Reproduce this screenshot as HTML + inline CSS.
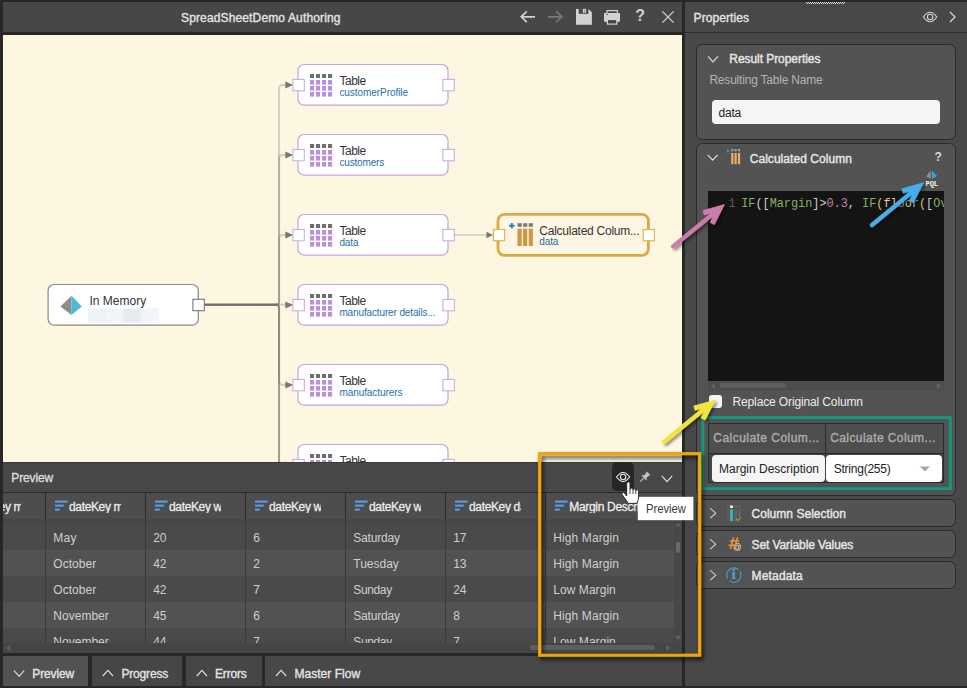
<!DOCTYPE html>
<html><head><meta charset="utf-8"><title>SpreadSheetDemo Authoring</title>
<style>
html,body{margin:0;padding:0;}
body{width:967px;height:688px;overflow:hidden;background:#272727;position:relative;font-family:"Liberation Sans",sans-serif;}
body>div,body>span,body>svg{position:absolute;}
div{box-sizing:border-box;}
span{white-space:pre;line-height:1;display:block;}
.m{font-family:"Liberation Mono",monospace;}
</style></head>
<body>
<div style="left:3px;top:2px;width:679px;height:30px;background:#474747;"></div>
<div style="left:3px;top:35px;width:679px;height:427px;background:#fdf6e0;"></div>
<div style="left:685px;top:2px;width:282px;height:684px;background:#484848;"></div>
<div style="left:685px;top:32px;width:282px;height:1px;background:#2e2e2e;"></div>
<div style="left:3px;top:462px;width:679px;height:30px;background:#484848;"></div>
<div style="left:3px;top:462px;width:679px;height:1px;background:#3a3a3a;"></div>
<div style="left:3px;top:492px;width:679px;height:1px;background:#2b2b2b;"></div>
<div style="left:3px;top:493px;width:679px;height:26px;background:#4d4d4d;"></div>
<div style="left:3px;top:519px;width:679px;height:5px;background:#474747;"></div>
<div style="left:3px;top:524px;width:671px;height:26px;background:#4a4a4a;"></div>
<div style="left:3px;top:550px;width:671px;height:26px;background:#525252;"></div>
<div style="left:3px;top:576px;width:671px;height:26px;background:#4a4a4a;"></div>
<div style="left:3px;top:602px;width:671px;height:26px;background:#525252;"></div>
<div style="left:3px;top:628px;width:671px;height:15px;background:#4a4a4a;"></div>
<div style="left:674px;top:519px;width:8px;height:124px;background:#474747;"></div>
<div style="left:3px;top:643px;width:679px;height:10px;background:#454545;"></div>
<div style="left:45px;top:493px;width:1px;height:26px;background:#2b2b2b;"></div>
<div style="left:45px;top:519px;width:1px;height:124px;background:#393939;"></div>
<div style="left:145px;top:493px;width:1px;height:26px;background:#2b2b2b;"></div>
<div style="left:145px;top:519px;width:1px;height:124px;background:#393939;"></div>
<div style="left:245px;top:493px;width:1px;height:26px;background:#2b2b2b;"></div>
<div style="left:245px;top:519px;width:1px;height:124px;background:#393939;"></div>
<div style="left:345px;top:493px;width:1px;height:26px;background:#2b2b2b;"></div>
<div style="left:345px;top:519px;width:1px;height:124px;background:#393939;"></div>
<div style="left:445px;top:493px;width:1px;height:26px;background:#2b2b2b;"></div>
<div style="left:445px;top:519px;width:1px;height:124px;background:#393939;"></div>
<div style="left:545px;top:493px;width:1px;height:26px;background:#2b2b2b;"></div>
<div style="left:545px;top:519px;width:1px;height:124px;background:#393939;"></div>
<div style="left:3px;top:656px;width:85px;height:30px;background:#525252;"></div>
<div style="left:92px;top:656px;width:90px;height:30px;background:#464646;"></div>
<div style="left:186px;top:656px;width:76px;height:30px;background:#464646;"></div>
<div style="left:265px;top:656px;width:417px;height:30px;background:#484848;"></div>
<div style="left:696px;top:44px;width:260px;height:96px;background:#535353;border:1px solid #2a2a2a;border-radius:6.5px;"></div>
<div style="left:696px;top:143px;width:260px;height:353px;background:#535353;border:1px solid #2a2a2a;border-radius:6.5px;"></div>
<div style="left:696px;top:499px;width:260px;height:28px;background:#535353;border:1px solid #2a2a2a;border-radius:6.5px;"></div>
<div style="left:696px;top:530px;width:260px;height:28px;background:#535353;border:1px solid #2a2a2a;border-radius:6.5px;"></div>
<div style="left:696px;top:561px;width:260px;height:28px;background:#535353;border:1px solid #2a2a2a;border-radius:6.5px;"></div>
<div style="left:711.8px;top:99.7px;width:228.7px;height:24.3px;background:#f5f5f5;border-radius:4px;"></div>
<div style="left:708.3px;top:191px;width:235.7px;height:190px;background:#141414;"></div>
<div style="left:708.3px;top:381px;width:235.7px;height:9.8px;background:#4d4d4d;"></div>
<div style="left:720px;top:383px;width:65.6px;height:5px;background:#5e5e5e;border-radius:2.5px;"></div>
<div style="left:709.2px;top:394.8px;width:13.2px;height:13.4px;background:#f4f4f4;border-radius:3px;"></div>
<div style="left:708.3px;top:423px;width:235.7px;height:60px;background:#2b2b2b;"></div>
<div style="left:709.3px;top:424px;width:116px;height:28.5px;background:#4e4e4e;"></div>
<div style="left:826.3px;top:424px;width:116.7px;height:28.5px;background:#4e4e4e;"></div>
<div style="left:709.3px;top:453.5px;width:233.7px;height:28.5px;background:#444;"></div>
<div style="left:711.8px;top:454.9px;width:113.2px;height:26.8px;background:#f5f5f5;border-radius:4px;"></div>
<div style="left:826.4px;top:454.9px;width:115.2px;height:26.8px;background:#fff;border-radius:4px;"></div>
<div style="left:675.6px;top:542.4px;width:4.8px;height:10.4px;background:#6a6a6a;border-radius:2.4px;"></div>
<div style="left:530.4px;top:645.4px;width:124.4px;height:5px;background:#5e5e5e;border-radius:2.5px;"></div>
<div style="left:3px;top:653px;width:679px;height:3px;background:#272727;"></div>
<svg style="left:0;top:0" width="967" height="688" viewBox="0 0 967 688">
<defs><clipPath id="cv"><rect x="3" y="35" width="679" height="427"/></clipPath></defs>
<g clip-path="url(#cv)">
<path d="M204.5,304.85 H276.05 Q279.05,304.85 279.05,301.85 V89 Q279.05,85 283.05,85 H287" fill="none" stroke="#646464" stroke-opacity="0.27" stroke-width="2"/>
<polygon points="285.3,81.5 293.4,85 285.3,88.5" fill="#777"/>
<path d="M204.5,304.85 H276.05 Q279.05,304.85 279.05,301.85 V159 Q279.05,155 283.05,155 H287" fill="none" stroke="#646464" stroke-opacity="0.27" stroke-width="2"/>
<polygon points="285.3,151.5 293.4,155 285.3,158.5" fill="#777"/>
<path d="M204.5,304.85 H276.05 Q279.05,304.85 279.05,301.85 V239 Q279.05,235 283.05,235 H287" fill="none" stroke="#646464" stroke-opacity="0.27" stroke-width="2"/>
<polygon points="285.3,231.5 293.4,235 285.3,238.5" fill="#777"/>
<path d="M204.5,304.85 H287" fill="none" stroke="#646464" stroke-opacity="0.27" stroke-width="2"/>
<polygon points="285.3,301.5 293.4,305 285.3,308.5" fill="#777"/>
<path d="M204.5,304.85 H276.05 Q279.05,304.85 279.05,307.85 V381 Q279.05,385 283.05,385 H287" fill="none" stroke="#646464" stroke-opacity="0.27" stroke-width="2"/>
<polygon points="285.3,381.5 293.4,385 285.3,388.5" fill="#777"/>
<path d="M204.5,304.85 H276.05 Q279.05,304.85 279.05,307.85 V461 Q279.05,465 283.05,465 H287" fill="none" stroke="#646464" stroke-opacity="0.27" stroke-width="2"/>
<polygon points="285.3,461.5 293.4,465 285.3,468.5" fill="#777"/>
<path d="M204.5,304.85 H276.05 Q279.05,304.85 279.05,307.85 V541 Q279.05,545 283.05,545 H287" fill="none" stroke="#646464" stroke-opacity="0.27" stroke-width="2"/>
<polygon points="285.3,541.5 293.4,545 285.3,548.5" fill="#777"/>
<path d="M204.5,304.85 H276.05 Q279.05,304.85 279.05,307.85 V621 Q279.05,625 283.05,625 H287" fill="none" stroke="#646464" stroke-opacity="0.27" stroke-width="2"/>
<polygon points="285.3,621.5 293.4,625 285.3,628.5" fill="#777"/>
<path d="M454.5,235 H488" fill="none" stroke="#646464" stroke-opacity="0.3" stroke-width="1.6"/>
<polygon points="486.5,231.8 493,235 486.5,238.2" fill="#777"/>
<rect x="298" y="64.5" width="150" height="40.6" rx="6" fill="#fff" stroke="#c9a2e3" stroke-width="1.2"/>
<rect x="292.9" y="79.4" width="11.4" height="11.4" fill="#fff" stroke="#c9a5e4" stroke-width="1"/>
<rect x="442.9" y="79.4" width="11.4" height="11.4" fill="#fff" stroke="#c9a5e4" stroke-width="1"/>
<rect x="310" y="74" width="4.1" height="4" fill="#6f6f6f"/>
<rect x="310" y="80" width="4.1" height="4.6" fill="#bb8fdd"/>
<rect x="310" y="86" width="4.1" height="4.6" fill="#bb8fdd"/>
<rect x="310" y="92" width="4.1" height="4.6" fill="#bb8fdd"/>
<rect x="316" y="74" width="4.1" height="4" fill="#6f6f6f"/>
<rect x="316" y="80" width="4.1" height="4.6" fill="#bb8fdd"/>
<rect x="316" y="86" width="4.1" height="4.6" fill="#bb8fdd"/>
<rect x="316" y="92" width="4.1" height="4.6" fill="#bb8fdd"/>
<rect x="322" y="74" width="4.1" height="4" fill="#6f6f6f"/>
<rect x="322" y="80" width="4.1" height="4.6" fill="#bb8fdd"/>
<rect x="322" y="86" width="4.1" height="4.6" fill="#bb8fdd"/>
<rect x="322" y="92" width="4.1" height="4.6" fill="#bb8fdd"/>
<rect x="328" y="74" width="4.1" height="4" fill="#6f6f6f"/>
<rect x="328" y="80" width="4.1" height="4.6" fill="#bb8fdd"/>
<rect x="328" y="86" width="4.1" height="4.6" fill="#bb8fdd"/>
<rect x="328" y="92" width="4.1" height="4.6" fill="#bb8fdd"/>
<rect x="298" y="134.5" width="150" height="40.6" rx="6" fill="#fff" stroke="#c9a2e3" stroke-width="1.2"/>
<rect x="292.9" y="149.4" width="11.4" height="11.4" fill="#fff" stroke="#c9a5e4" stroke-width="1"/>
<rect x="442.9" y="149.4" width="11.4" height="11.4" fill="#fff" stroke="#c9a5e4" stroke-width="1"/>
<rect x="310" y="144" width="4.1" height="4" fill="#6f6f6f"/>
<rect x="310" y="150" width="4.1" height="4.6" fill="#bb8fdd"/>
<rect x="310" y="156" width="4.1" height="4.6" fill="#bb8fdd"/>
<rect x="310" y="162" width="4.1" height="4.6" fill="#bb8fdd"/>
<rect x="316" y="144" width="4.1" height="4" fill="#6f6f6f"/>
<rect x="316" y="150" width="4.1" height="4.6" fill="#bb8fdd"/>
<rect x="316" y="156" width="4.1" height="4.6" fill="#bb8fdd"/>
<rect x="316" y="162" width="4.1" height="4.6" fill="#bb8fdd"/>
<rect x="322" y="144" width="4.1" height="4" fill="#6f6f6f"/>
<rect x="322" y="150" width="4.1" height="4.6" fill="#bb8fdd"/>
<rect x="322" y="156" width="4.1" height="4.6" fill="#bb8fdd"/>
<rect x="322" y="162" width="4.1" height="4.6" fill="#bb8fdd"/>
<rect x="328" y="144" width="4.1" height="4" fill="#6f6f6f"/>
<rect x="328" y="150" width="4.1" height="4.6" fill="#bb8fdd"/>
<rect x="328" y="156" width="4.1" height="4.6" fill="#bb8fdd"/>
<rect x="328" y="162" width="4.1" height="4.6" fill="#bb8fdd"/>
<rect x="298" y="214.5" width="150" height="40.6" rx="6" fill="#fff" stroke="#c9a2e3" stroke-width="1.2"/>
<rect x="292.9" y="229.4" width="11.4" height="11.4" fill="#fff" stroke="#c9a5e4" stroke-width="1"/>
<rect x="442.9" y="229.4" width="11.4" height="11.4" fill="#fff" stroke="#c9a5e4" stroke-width="1"/>
<rect x="310" y="224" width="4.1" height="4" fill="#6f6f6f"/>
<rect x="310" y="230" width="4.1" height="4.6" fill="#bb8fdd"/>
<rect x="310" y="236" width="4.1" height="4.6" fill="#bb8fdd"/>
<rect x="310" y="242" width="4.1" height="4.6" fill="#bb8fdd"/>
<rect x="316" y="224" width="4.1" height="4" fill="#6f6f6f"/>
<rect x="316" y="230" width="4.1" height="4.6" fill="#bb8fdd"/>
<rect x="316" y="236" width="4.1" height="4.6" fill="#bb8fdd"/>
<rect x="316" y="242" width="4.1" height="4.6" fill="#bb8fdd"/>
<rect x="322" y="224" width="4.1" height="4" fill="#6f6f6f"/>
<rect x="322" y="230" width="4.1" height="4.6" fill="#bb8fdd"/>
<rect x="322" y="236" width="4.1" height="4.6" fill="#bb8fdd"/>
<rect x="322" y="242" width="4.1" height="4.6" fill="#bb8fdd"/>
<rect x="328" y="224" width="4.1" height="4" fill="#6f6f6f"/>
<rect x="328" y="230" width="4.1" height="4.6" fill="#bb8fdd"/>
<rect x="328" y="236" width="4.1" height="4.6" fill="#bb8fdd"/>
<rect x="328" y="242" width="4.1" height="4.6" fill="#bb8fdd"/>
<rect x="298" y="284.5" width="150" height="40.6" rx="6" fill="#fff" stroke="#c9a2e3" stroke-width="1.2"/>
<rect x="292.9" y="299.4" width="11.4" height="11.4" fill="#fff" stroke="#c9a5e4" stroke-width="1"/>
<rect x="442.9" y="299.4" width="11.4" height="11.4" fill="#fff" stroke="#c9a5e4" stroke-width="1"/>
<rect x="310" y="294" width="4.1" height="4" fill="#6f6f6f"/>
<rect x="310" y="300" width="4.1" height="4.6" fill="#bb8fdd"/>
<rect x="310" y="306" width="4.1" height="4.6" fill="#bb8fdd"/>
<rect x="310" y="312" width="4.1" height="4.6" fill="#bb8fdd"/>
<rect x="316" y="294" width="4.1" height="4" fill="#6f6f6f"/>
<rect x="316" y="300" width="4.1" height="4.6" fill="#bb8fdd"/>
<rect x="316" y="306" width="4.1" height="4.6" fill="#bb8fdd"/>
<rect x="316" y="312" width="4.1" height="4.6" fill="#bb8fdd"/>
<rect x="322" y="294" width="4.1" height="4" fill="#6f6f6f"/>
<rect x="322" y="300" width="4.1" height="4.6" fill="#bb8fdd"/>
<rect x="322" y="306" width="4.1" height="4.6" fill="#bb8fdd"/>
<rect x="322" y="312" width="4.1" height="4.6" fill="#bb8fdd"/>
<rect x="328" y="294" width="4.1" height="4" fill="#6f6f6f"/>
<rect x="328" y="300" width="4.1" height="4.6" fill="#bb8fdd"/>
<rect x="328" y="306" width="4.1" height="4.6" fill="#bb8fdd"/>
<rect x="328" y="312" width="4.1" height="4.6" fill="#bb8fdd"/>
<rect x="298" y="364.5" width="150" height="40.6" rx="6" fill="#fff" stroke="#c9a2e3" stroke-width="1.2"/>
<rect x="292.9" y="379.4" width="11.4" height="11.4" fill="#fff" stroke="#c9a5e4" stroke-width="1"/>
<rect x="442.9" y="379.4" width="11.4" height="11.4" fill="#fff" stroke="#c9a5e4" stroke-width="1"/>
<rect x="310" y="374" width="4.1" height="4" fill="#6f6f6f"/>
<rect x="310" y="380" width="4.1" height="4.6" fill="#bb8fdd"/>
<rect x="310" y="386" width="4.1" height="4.6" fill="#bb8fdd"/>
<rect x="310" y="392" width="4.1" height="4.6" fill="#bb8fdd"/>
<rect x="316" y="374" width="4.1" height="4" fill="#6f6f6f"/>
<rect x="316" y="380" width="4.1" height="4.6" fill="#bb8fdd"/>
<rect x="316" y="386" width="4.1" height="4.6" fill="#bb8fdd"/>
<rect x="316" y="392" width="4.1" height="4.6" fill="#bb8fdd"/>
<rect x="322" y="374" width="4.1" height="4" fill="#6f6f6f"/>
<rect x="322" y="380" width="4.1" height="4.6" fill="#bb8fdd"/>
<rect x="322" y="386" width="4.1" height="4.6" fill="#bb8fdd"/>
<rect x="322" y="392" width="4.1" height="4.6" fill="#bb8fdd"/>
<rect x="328" y="374" width="4.1" height="4" fill="#6f6f6f"/>
<rect x="328" y="380" width="4.1" height="4.6" fill="#bb8fdd"/>
<rect x="328" y="386" width="4.1" height="4.6" fill="#bb8fdd"/>
<rect x="328" y="392" width="4.1" height="4.6" fill="#bb8fdd"/>
<rect x="298" y="444.5" width="150" height="40.6" rx="6" fill="#fff" stroke="#c9a2e3" stroke-width="1.2"/>
<rect x="292.9" y="459.4" width="11.4" height="11.4" fill="#fff" stroke="#c9a5e4" stroke-width="1"/>
<rect x="442.9" y="459.4" width="11.4" height="11.4" fill="#fff" stroke="#c9a5e4" stroke-width="1"/>
<rect x="310" y="454" width="4.1" height="4" fill="#6f6f6f"/>
<rect x="310" y="460" width="4.1" height="4.6" fill="#bb8fdd"/>
<rect x="310" y="466" width="4.1" height="4.6" fill="#bb8fdd"/>
<rect x="310" y="472" width="4.1" height="4.6" fill="#bb8fdd"/>
<rect x="316" y="454" width="4.1" height="4" fill="#6f6f6f"/>
<rect x="316" y="460" width="4.1" height="4.6" fill="#bb8fdd"/>
<rect x="316" y="466" width="4.1" height="4.6" fill="#bb8fdd"/>
<rect x="316" y="472" width="4.1" height="4.6" fill="#bb8fdd"/>
<rect x="322" y="454" width="4.1" height="4" fill="#6f6f6f"/>
<rect x="322" y="460" width="4.1" height="4.6" fill="#bb8fdd"/>
<rect x="322" y="466" width="4.1" height="4.6" fill="#bb8fdd"/>
<rect x="322" y="472" width="4.1" height="4.6" fill="#bb8fdd"/>
<rect x="328" y="454" width="4.1" height="4" fill="#6f6f6f"/>
<rect x="328" y="460" width="4.1" height="4.6" fill="#bb8fdd"/>
<rect x="328" y="466" width="4.1" height="4.6" fill="#bb8fdd"/>
<rect x="328" y="472" width="4.1" height="4.6" fill="#bb8fdd"/>
</g>
<g clip-path="url(#cv)">
<rect x="48.1" y="284.5" width="150.2" height="40.6" rx="6" fill="#fff" stroke="#8a8a8a" stroke-width="1.2"/>
<rect x="192.9" y="299.3" width="11.4" height="11.4" fill="#fff" stroke="#777" stroke-width="1.1"/>
<polygon points="60.4,306.6 71.5,295.8 71.5,315" fill="#8e8e8e"/>
<polygon points="71.5,295.8 81.8,306.6 71.5,315" fill="#4db8d9"/>
<rect x="88" y="308.5" width="18" height="14" fill="#eef2f6"/>
<rect x="106" y="308.5" width="17" height="14" fill="#f2f5f8"/>
<rect x="123" y="308.5" width="18" height="14" fill="#e6eaf0"/>
<rect x="141" y="308.5" width="18" height="14" fill="#f1f4f8"/>
<rect x="498" y="214.3" width="150.4" height="41" rx="6.5" fill="#fdf6e2" stroke="#dba944" stroke-width="2.8"/>
<rect x="493.4" y="229.5" width="11.2" height="11.2" fill="#fff" stroke="#e0b458" stroke-width="1.2"/>
<rect x="643.2" y="229.5" width="11.2" height="11.2" fill="#fff" stroke="#e0b458" stroke-width="1.2"/>
<path d="M511.8,223 V228.6 M509,225.8 H514.6" stroke="#2f7fc1" stroke-width="1.9" fill="none"/>
<rect x="517.5" y="223.2" width="4.2" height="3.6" fill="#7a7a7a"/>
<rect x="517.5" y="228.6" width="4.2" height="17.4" fill="#cf9648"/>
<rect x="523.1" y="223.2" width="4.2" height="3.6" fill="#7a7a7a"/>
<rect x="523.1" y="228.6" width="4.2" height="17.4" fill="#cf9648"/>
<rect x="528.7" y="223.2" width="4.2" height="3.6" fill="#7a7a7a"/>
<rect x="528.7" y="228.6" width="4.2" height="17.4" fill="#cf9648"/>
</g>
<rect x="702.85" y="417.5" width="247.5" height="71.1" fill="none" stroke="#119a7b" stroke-width="2.9"/>
</svg>
<span style="left:181px;top:12.03px;font-size:12px;font-weight:400;color:#e4e4e4;letter-spacing:0.14px;-webkit-text-stroke:0.35px #e4e4e4;">SpreadSheetDemo Authoring</span>
<span style="left:693.6px;top:12.03px;font-size:12px;font-weight:400;color:#e4e4e4;letter-spacing:0.07px;-webkit-text-stroke:0.35px #e4e4e4;">Properties</span>
<span style="left:11.3px;top:471.73px;font-size:12px;font-weight:400;color:#dcdcdc;letter-spacing:-0.14px;-webkit-text-stroke:0.35px #dcdcdc;">Preview</span>
<span style="left:32.3px;top:668.03px;font-size:12px;font-weight:400;color:#e4e4e4;letter-spacing:-0.14px;-webkit-text-stroke:0.35px #e4e4e4;">Preview</span>
<span style="left:121.5px;top:668.03px;font-size:12px;font-weight:400;color:#e4e4e4;letter-spacing:-0.19px;-webkit-text-stroke:0.35px #e4e4e4;">Progress</span>
<span style="left:215px;top:668.03px;font-size:12px;font-weight:400;color:#e4e4e4;letter-spacing:-0.18px;-webkit-text-stroke:0.35px #e4e4e4;">Errors</span>
<span style="left:294.4px;top:668.03px;font-size:12px;font-weight:400;color:#e4e4e4;letter-spacing:0.04px;-webkit-text-stroke:0.35px #e4e4e4;">Master Flow</span>
<span style="left:339.6px;top:75.03px;font-size:12px;font-weight:400;color:#333;letter-spacing:-0.54px;">Table</span>
<span style="left:339.4px;top:87.50px;font-size:10px;font-weight:400;color:#1f6fa8;letter-spacing:-0.06px;">customerProfile</span>
<span style="left:339.6px;top:145.03px;font-size:12px;font-weight:400;color:#333;letter-spacing:-0.54px;">Table</span>
<span style="left:339.4px;top:157.50px;font-size:10px;font-weight:400;color:#1f6fa8;letter-spacing:-0.16px;">customers</span>
<span style="left:339.6px;top:225.03px;font-size:12px;font-weight:400;color:#333;letter-spacing:-0.54px;">Table</span>
<span style="left:339.4px;top:237.50px;font-size:10px;font-weight:400;color:#1f6fa8;letter-spacing:-0.12px;">data</span>
<span style="left:339.6px;top:295.03px;font-size:12px;font-weight:400;color:#333;letter-spacing:-0.54px;">Table</span>
<span style="left:339.4px;top:307.50px;font-size:10px;font-weight:400;color:#1f6fa8;letter-spacing:-0.13px;">manufacturer details...</span>
<span style="left:339.6px;top:375.03px;font-size:12px;font-weight:400;color:#333;letter-spacing:-0.54px;">Table</span>
<span style="left:339.4px;top:387.50px;font-size:10px;font-weight:400;color:#1f6fa8;letter-spacing:-0.07px;">manufacturers</span>
<span style="left:339.6px;top:455.03px;font-size:12px;font-weight:400;color:#333;letter-spacing:-0.54px;height:8px;overflow:hidden;">Table</span>
<span style="left:89.5px;top:295.03px;font-size:12px;font-weight:400;color:#333;letter-spacing:0.00px;">In Memory</span>
<span style="left:539.3px;top:224.73px;font-size:12px;font-weight:400;color:#333;letter-spacing:-0.25px;">Calculated Colum...</span>
<span style="left:539.3px;top:237.09px;font-size:10px;font-weight:400;color:#1f6fa8;letter-spacing:-0.12px;">data</span>
<span style="left:729.3px;top:52.73px;font-size:12px;font-weight:400;color:#e6e6e6;letter-spacing:-0.06px;-webkit-text-stroke:0.4px #e6e6e6;">Result Properties</span>
<span style="left:709.4px;top:73.63px;font-size:12px;font-weight:400;color:#b4b4b4;letter-spacing:-0.20px;">Resulting Table Name</span>
<span style="left:718.5px;top:106.73px;font-size:12px;font-weight:400;color:#222;letter-spacing:-0.21px;">data</span>
<span style="left:749.7px;top:152.73px;font-size:12px;font-weight:400;color:#e6e6e6;letter-spacing:0.05px;-webkit-text-stroke:0.4px #e6e6e6;">Calculated Column</span>
<span style="left:934.5px;top:151.03px;font-size:12px;font-weight:700;color:#d8d8d8;letter-spacing:0.00px;">?</span>
<span style="left:732.5px;top:395.63px;font-size:12px;font-weight:400;color:#ececec;letter-spacing:-0.13px;">Replace Original Column</span>
<span style="left:713.3px;top:432.03px;font-size:12px;font-weight:400;color:#ababab;letter-spacing:0.46px;-webkit-text-stroke:0.4px #ababab;">Calculate Colum...</span>
<span style="left:830.2px;top:432.03px;font-size:12px;font-weight:400;color:#ababab;letter-spacing:0.42px;-webkit-text-stroke:0.4px #ababab;">Calculate Colum...</span>
<span style="left:719px;top:462.73px;font-size:12px;font-weight:400;color:#222;letter-spacing:-0.00px;">Margin Description</span>
<span style="left:833.7px;top:462.73px;font-size:12px;font-weight:400;color:#222;letter-spacing:-0.23px;">String(255)</span>
<span style="left:751.5px;top:508.03px;font-size:12px;font-weight:400;color:#e6e6e6;letter-spacing:0.03px;-webkit-text-stroke:0.4px #e6e6e6;">Column Selection</span>
<span style="left:751.5px;top:539.03px;font-size:12px;font-weight:400;color:#e6e6e6;letter-spacing:-0.10px;-webkit-text-stroke:0.4px #e6e6e6;">Set Variable Values</span>
<span style="left:751.5px;top:570.03px;font-size:12px;font-weight:400;color:#e6e6e6;letter-spacing:0.18px;-webkit-text-stroke:0.4px #e6e6e6;">Metadata</span>
<span class="m" style="left:728.6px;top:194.83px;font-size:11.85px;line-height:18px;color:#5a5a5a">1</span>
<span class="m" style="left:741.2px;top:194.83px;font-size:11.85px;line-height:18px;width:202.79999999999995px;overflow:hidden;"><span style="display:inline;color:#86b05e">IF</span><span style="display:inline;color:#d0d0d0">([</span><span style="display:inline;color:#86b05e">Margin</span><span style="display:inline;color:#d0d0d0">]&gt;</span><span style="display:inline;color:#c77fae">0.3</span><span style="display:inline;color:#d0d0d0">, </span><span style="display:inline;color:#86b05e">IF</span><span style="display:inline;color:#d7c352">(</span><span style="display:inline;color:#d6d08e">floor</span><span style="display:inline;color:#d7c352">(</span><span style="display:inline;color:#d0d0d0">[</span><span style="display:inline;color:#86b05e">OverallMargin</span></span>
<span style="left:635.2px;top:7.91px;font-size:16px;font-weight:700;color:#d2d2d2;letter-spacing:0.00px;">?</span>
<span style="left:925.5px;top:180.5px;font-size:7.2px;font-weight:700;color:#f4f4f4;letter-spacing:-0.15px;font-family:'Liberation Mono',monospace">PQL</span>
<span style="left:733px;top:542.6px;font-size:8.4px;color:#ededed;">@</span>
<span style="left:731.2px;top:567.6px;font-size:14px;font-family:'Liberation Serif',serif;font-weight:700;color:#4f9bd0;transform:scaleX(1.35);transform-origin:0 0;">i</span>
<div style="left:3px;top:493px;width:18px;height:26px;overflow:hidden;"><span style="position:absolute;left:-34px;top:8.03px;font-size:12px;color:#ececec;letter-spacing:-0.35px;-webkit-text-stroke:0.3px #ececec;">dateKey month</span></div>
<span style="left:69px;top:501.03px;font-size:12px;font-weight:400;color:#ececec;letter-spacing:0.00px;-webkit-text-stroke:0.3px #ececec;width:52px;overflow:hidden;letter-spacing:-0.35px;">dateKey month</span>
<span style="left:169px;top:501.03px;font-size:12px;font-weight:400;color:#ececec;letter-spacing:0.00px;-webkit-text-stroke:0.3px #ececec;width:52px;overflow:hidden;letter-spacing:-0.35px;">dateKey week</span>
<span style="left:269px;top:501.03px;font-size:12px;font-weight:400;color:#ececec;letter-spacing:0.00px;-webkit-text-stroke:0.3px #ececec;width:52px;overflow:hidden;letter-spacing:-0.35px;">dateKey week</span>
<span style="left:369px;top:501.03px;font-size:12px;font-weight:400;color:#ececec;letter-spacing:0.00px;-webkit-text-stroke:0.3px #ececec;width:52px;overflow:hidden;letter-spacing:-0.35px;">dateKey week</span>
<span style="left:469px;top:501.03px;font-size:12px;font-weight:400;color:#ececec;letter-spacing:0.00px;-webkit-text-stroke:0.3px #ececec;width:52px;overflow:hidden;letter-spacing:-0.35px;">dateKey day</span>
<span style="left:569.2px;top:501.03px;font-size:12px;font-weight:400;color:#ececec;letter-spacing:0.00px;-webkit-text-stroke:0.3px #ececec;width:104px;overflow:hidden;letter-spacing:-0.3px;">Margin Description</span>
<span style="left:53.3px;top:532.23px;font-size:12px;font-weight:400;color:#cfcfcf;letter-spacing:0.28px;">May</span>
<span style="left:53.3px;top:558.23px;font-size:12px;font-weight:400;color:#cfcfcf;letter-spacing:0.04px;">October</span>
<span style="left:53.3px;top:584.23px;font-size:12px;font-weight:400;color:#cfcfcf;letter-spacing:0.04px;">October</span>
<span style="left:53.3px;top:610.23px;font-size:12px;font-weight:400;color:#cfcfcf;letter-spacing:0.02px;">November</span>
<span style="left:53.3px;top:636.23px;font-size:12px;font-weight:400;color:#cfcfcf;letter-spacing:0.02px;height:6.5px;overflow:hidden;">November</span>
<span style="left:153.3px;top:532.23px;font-size:12px;font-weight:400;color:#cfcfcf;letter-spacing:0.00px;letter-spacing:-0.2px;">20</span>
<span style="left:153.3px;top:558.23px;font-size:12px;font-weight:400;color:#cfcfcf;letter-spacing:0.00px;letter-spacing:-0.2px;">42</span>
<span style="left:153.3px;top:584.23px;font-size:12px;font-weight:400;color:#cfcfcf;letter-spacing:0.00px;letter-spacing:-0.2px;">42</span>
<span style="left:153.3px;top:610.23px;font-size:12px;font-weight:400;color:#cfcfcf;letter-spacing:0.00px;letter-spacing:-0.2px;">45</span>
<span style="left:153.3px;top:636.23px;font-size:12px;font-weight:400;color:#cfcfcf;letter-spacing:0.00px;height:6.5px;overflow:hidden;letter-spacing:-0.2px;">44</span>
<span style="left:253.3px;top:532.23px;font-size:12px;font-weight:400;color:#cfcfcf;letter-spacing:0.00px;letter-spacing:-0.2px;">6</span>
<span style="left:253.3px;top:558.23px;font-size:12px;font-weight:400;color:#cfcfcf;letter-spacing:0.00px;letter-spacing:-0.2px;">2</span>
<span style="left:253.3px;top:584.23px;font-size:12px;font-weight:400;color:#cfcfcf;letter-spacing:0.00px;letter-spacing:-0.2px;">7</span>
<span style="left:253.3px;top:610.23px;font-size:12px;font-weight:400;color:#cfcfcf;letter-spacing:0.00px;letter-spacing:-0.2px;">6</span>
<span style="left:253.3px;top:636.23px;font-size:12px;font-weight:400;color:#cfcfcf;letter-spacing:0.00px;height:6.5px;overflow:hidden;letter-spacing:-0.2px;">7</span>
<span style="left:353.3px;top:532.23px;font-size:12px;font-weight:400;color:#cfcfcf;letter-spacing:-0.19px;">Saturday</span>
<span style="left:353.3px;top:558.23px;font-size:12px;font-weight:400;color:#cfcfcf;letter-spacing:-0.01px;">Tuesday</span>
<span style="left:353.3px;top:584.23px;font-size:12px;font-weight:400;color:#cfcfcf;letter-spacing:-0.37px;">Sunday</span>
<span style="left:353.3px;top:610.23px;font-size:12px;font-weight:400;color:#cfcfcf;letter-spacing:-0.19px;">Saturday</span>
<span style="left:353.3px;top:636.23px;font-size:12px;font-weight:400;color:#cfcfcf;letter-spacing:-0.37px;height:6.5px;overflow:hidden;">Sunday</span>
<span style="left:453.3px;top:532.23px;font-size:12px;font-weight:400;color:#cfcfcf;letter-spacing:0.00px;letter-spacing:-0.2px;">17</span>
<span style="left:453.3px;top:558.23px;font-size:12px;font-weight:400;color:#cfcfcf;letter-spacing:0.00px;letter-spacing:-0.2px;">13</span>
<span style="left:453.3px;top:584.23px;font-size:12px;font-weight:400;color:#cfcfcf;letter-spacing:0.00px;letter-spacing:-0.2px;">24</span>
<span style="left:453.3px;top:610.23px;font-size:12px;font-weight:400;color:#cfcfcf;letter-spacing:0.00px;letter-spacing:-0.2px;">8</span>
<span style="left:453.3px;top:636.23px;font-size:12px;font-weight:400;color:#cfcfcf;letter-spacing:0.00px;height:6.5px;overflow:hidden;letter-spacing:-0.2px;">7</span>
<span style="left:553.3px;top:532.23px;font-size:12px;font-weight:400;color:#cfcfcf;letter-spacing:0.10px;">High Margin</span>
<span style="left:553.3px;top:558.23px;font-size:12px;font-weight:400;color:#cfcfcf;letter-spacing:0.10px;">High Margin</span>
<span style="left:553.3px;top:584.23px;font-size:12px;font-weight:400;color:#cfcfcf;letter-spacing:0.05px;">Low Margin</span>
<span style="left:553.3px;top:610.23px;font-size:12px;font-weight:400;color:#cfcfcf;letter-spacing:0.10px;">High Margin</span>
<span style="left:553.3px;top:636.23px;font-size:12px;font-weight:400;color:#cfcfcf;letter-spacing:0.05px;height:6.5px;overflow:hidden;">Low Margin</span>
<div style="left:612px;top:462.2px;width:21.8px;height:29.2px;background:#262626;border-radius:5px;"></div>
<svg style="left:0;top:0" width="967" height="688" viewBox="0 0 967 688">
<path d="M708,56.4 L713.0,61.8 L718,56.4" fill="none" stroke="#dcdcdc" stroke-width="1.2"/>
<path d="M707.7,154.8 L712.7,160.20000000000002 L717.7,154.8" fill="none" stroke="#dcdcdc" stroke-width="1.2"/>
<polygon points="919.8,466.4 930,466.4 924.9,471.4" fill="#a8a8a8"/>
<polygon points="711,386 715,383 715,389" fill="#626262"/>
<polygon points="941.4,386 937,383 937,389" fill="#626262"/>
<path d="M710.3,508.3 L715.6999999999999,513.2 L710.3,518.1" fill="none" stroke="#d2d2d2" stroke-width="1.05"/>
<path d="M710.3,539.3 L715.6999999999999,544.1999999999999 L710.3,549.0999999999999" fill="none" stroke="#d2d2d2" stroke-width="1.05"/>
<path d="M710.3,570.3 L715.6999999999999,575.1999999999999 L710.3,580.0999999999999" fill="none" stroke="#d2d2d2" stroke-width="1.05"/>
<path d="M535,16.8 H521.4 M526.8,11.4 L521.2,16.8 L526.8,22.2" fill="none" stroke="#d2d2d2" stroke-width="1.7" stroke-linejoin="miter"/>
<path d="M548,16.8 H561.6 M556.2,11.4 L561.8,16.8 L556.2,22.2" fill="none" stroke="#787878" stroke-width="1.7"/>
<path d="M576,9 H588.4 L591.9,12.3 V24.8 H576 Z" fill="#d2d2d2"/>
<rect x="578.7" y="8.8" width="9.7" height="5" fill="#474747"/><rect x="582.8" y="8.8" width="3.3" height="4" fill="#cfcfcf"/><rect x="584" y="9.6" width="0.9" height="3.2" fill="#8a8a8a"/>
<rect x="607" y="10.6" width="10.4" height="4" fill="#474747" stroke="#d2d2d2" stroke-width="1.2"/>
<rect x="604" y="13" width="16" height="8.8" rx="0.8" fill="#d2d2d2"/>
<rect x="606.4" y="14" width="1.6" height="0.9" fill="#474747"/>
<rect x="607.4" y="19.5" width="9.4" height="4.6" fill="#474747" stroke="#d2d2d2" stroke-width="1.2"/>
<path d="M662.4,11.4 L673.6,22.6 M673.6,11.4 L662.4,22.6" stroke="#d2d2d2" stroke-width="1.3" fill="none"/>
<path d="M923.4,17 Q930.1,7.6 936.8000000000001,17 Q930.1,26.4 923.4,17 Z" fill="none" stroke="#d4d4d4" stroke-width="1.1"/><circle cx="930.1" cy="17" r="2.7" fill="none" stroke="#d4d4d4" stroke-width="1.1"/>
<path d="M950,12 L955,17.0 L950,22" fill="none" stroke="#dcdcdc" stroke-width="1.2"/>
<path d="M806,2.5 H846" stroke="#e2e2e2" stroke-width="1" stroke-dasharray="1,1"/><path d="M807,3.5 H845" stroke="#e2e2e2" stroke-width="1" stroke-dasharray="1,1"/>
<polygon points="727,149 729.8,151 727,153" fill="#3f8fd0"/>
<rect x="731.2" y="149" width="2.2" height="2.3" fill="#9e9e9e"/>
<rect x="731.2" y="153" width="2.2" height="11.2" fill="#ecb168"/>
<rect x="734.5" y="149" width="2.2" height="2.3" fill="#9e9e9e"/>
<rect x="734.5" y="153" width="2.2" height="11.2" fill="#ecb168"/>
<rect x="737.9" y="149" width="2.2" height="2.3" fill="#9e9e9e"/>
<rect x="737.9" y="153" width="2.2" height="11.2" fill="#ecb168"/>
<polygon points="926,176.4 930.8,170.4 930.8,178.8" fill="#8f8f8f"/>
<polygon points="931.9,170.4 937.2,176 931.9,178.8" fill="#2fa8dc"/>
<rect x="727.2" y="505.6" width="1.4" height="15.6" fill="#606060"/>
<rect x="730" y="505.5" width="3" height="2.5" fill="#ececec"/><rect x="730" y="509.3" width="3" height="11.9" fill="#35b4b4"/>
<rect x="734.3" y="505.6" width="2.7" height="2.2" fill="#666"/><rect x="734.3" y="509.3" width="2.7" height="11.9" fill="#626262"/>
<rect x="738" y="505.6" width="2.7" height="2.2" fill="#666"/><rect x="738" y="509.3" width="2.7" height="8" fill="#626262"/>
<path d="M736.2,518.6 L737.9,520.7 L741,517" fill="none" stroke="#76b43c" stroke-width="1.1"/>
<path d="M733.6,537.2 L730.4,549 M737.6,537.2 L734.4,549 M729.8,541 H739 M728.6,545.2 H737.8" fill="none" stroke="#e59a33" stroke-width="1.5"/>
<circle cx="733.9" cy="575.1" r="7.1" fill="none" stroke="#4f9bd0" stroke-width="1.15" stroke-dasharray="19.5 2.8" transform="rotate(-30 733.9 575.1)"/>
<rect x="55" y="500.6" width="12.6" height="2" fill="#5b9bf0"/><rect x="55" y="504.6" width="8.8" height="2" fill="#5b9bf0"/><rect x="55" y="508.6" width="4.8" height="2" fill="#5b9bf0"/>
<rect x="155" y="500.6" width="12.6" height="2" fill="#5b9bf0"/><rect x="155" y="504.6" width="8.8" height="2" fill="#5b9bf0"/><rect x="155" y="508.6" width="4.8" height="2" fill="#5b9bf0"/>
<rect x="255" y="500.6" width="12.6" height="2" fill="#5b9bf0"/><rect x="255" y="504.6" width="8.8" height="2" fill="#5b9bf0"/><rect x="255" y="508.6" width="4.8" height="2" fill="#5b9bf0"/>
<rect x="355" y="500.6" width="12.6" height="2" fill="#5b9bf0"/><rect x="355" y="504.6" width="8.8" height="2" fill="#5b9bf0"/><rect x="355" y="508.6" width="4.8" height="2" fill="#5b9bf0"/>
<rect x="455" y="500.6" width="12.6" height="2" fill="#5b9bf0"/><rect x="455" y="504.6" width="8.8" height="2" fill="#5b9bf0"/><rect x="455" y="508.6" width="4.8" height="2" fill="#5b9bf0"/>
<rect x="555" y="500.6" width="12.6" height="2" fill="#5b9bf0"/><rect x="555" y="504.6" width="8.8" height="2" fill="#5b9bf0"/><rect x="555" y="508.6" width="4.8" height="2" fill="#5b9bf0"/>
<polygon points="675.6,526.6 681.2,526.6 678.4,522.4" fill="#606060"/>
<polygon points="675.2,635.8 681.2,635.8 678.2,640.2" fill="#626262"/>
<polygon points="5.4,648 10,645 10,651" fill="#5c5c5c"/>
<polygon points="670.4,648 666,645 666,651" fill="#5c5c5c"/>
<path d="M14,670.6 L19.1,676.2 L24.2,670.6" fill="none" stroke="#dcdcdc" stroke-width="1.2"/>
<path d="M102.8,676.0 L107.89999999999999,670.4 L113.0,676.0" fill="none" stroke="#dcdcdc" stroke-width="1.2"/>
<path d="M196.8,676.0 L201.9,670.4 L207.0,676.0" fill="none" stroke="#dcdcdc" stroke-width="1.2"/>
<path d="M276,676.0 L281.1,670.4 L286.2,676.0" fill="none" stroke="#dcdcdc" stroke-width="1.2"/>
<path d="M616.5,477 Q623.1,468.0 629.7,477 Q623.1,486.0 616.5,477 Z" fill="none" stroke="#ececec" stroke-width="1.1"/><circle cx="623.1" cy="477" r="2.7" fill="none" stroke="#ececec" stroke-width="1.1"/>
<g transform="translate(644.4,477.5) rotate(45) scale(0.8)" fill="#c4c4c4"><rect x="-2.3" y="-6.4" width="4.6" height="6"/><rect x="-3.9" y="-0.8" width="7.8" height="1.8"/><rect x="-0.6" y="1" width="1.2" height="6.4"/><rect x="-3.1" y="-7.6" width="6.2" height="1.5"/></g>
<path d="M661.8,475.8 L667.0,481.6 L672.1999999999999,475.8" fill="none" stroke="#dcdcdc" stroke-width="1.2"/>
<defs><filter id="sh" x="-20%" y="-20%" width="140%" height="140%"><feGaussianBlur in="SourceAlpha" stdDeviation="2.2"/><feOffset dx="2" dy="3.2"/><feComponentTransfer><feFuncA type="linear" slope="0.8"/></feComponentTransfer><feMerge><feMergeNode/><feMergeNode in="SourceGraphic"/></feMerge></filter></defs>
<rect x="539.6" y="453.6" width="160" height="201.6" fill="none" stroke="#eda50b" stroke-width="3.1" filter="url(#sh)"/>
<rect x="637.8" y="496.8" width="55.6" height="23.4" fill="#fff"/>
<text x="646" y="512.8" font-family="Liberation Sans, sans-serif" font-size="12" fill="#3a3a3a" textLength="40" lengthAdjust="spacingAndGlyphs">Preview</text>
<path d="M626.7,483.5 a1.65,1.65 0 0 1 3.3,0 V489.6 a1.5,1.5 0 0 1 3,0 V490.2 a1.4,1.4 0 0 1 2.8,0 V491 a1.4,1.4 0 0 1 2.8,0 V497 q0,3.6 -2,6.4 H628.2 q-1.6,-2.8 -3.4,-5.2 L622.2,494.8 q-0.9,-1.4 0.4,-2.1 q1.2,-0.5 2.2,0.8 L626.7,496 Z" fill="#fff" stroke="#1c1c1c" stroke-width="0.9" stroke-linejoin="round"/>
<path d="M630,489.6 V494 M633,490.2 V494 M635.8,491 V494" stroke="#1c1c1c" stroke-width="0.8" fill="none"/>
<defs><filter id="sh2" x="-30%" y="-30%" width="160%" height="160%"><feGaussianBlur in="SourceAlpha" stdDeviation="1.4"/><feOffset dx="1.6" dy="2.2"/><feComponentTransfer><feFuncA type="linear" slope="0.45"/></feComponentTransfer><feMerge><feMergeNode/><feMergeNode in="SourceGraphic"/></feMerge></filter></defs>
<g filter="url(#sh2)"><path d="M673.2,246.4 L713.8,213.2" stroke="#cb7cab" stroke-width="4.4" stroke-linecap="round" fill="none"/><polygon points="724.4,204.6 702.9,210.6 704.1,214.9 710.1,213.4 712.9,216.8 710.3,222.5 714.3,224.5" fill="#cb7cab" stroke="#cb7cab" stroke-width="0.8" stroke-linejoin="round"/></g>
<g filter="url(#sh2)"><path d="M872.0,225.0 L912.9,191.4" stroke="#47aee9" stroke-width="4.4" stroke-linecap="round" fill="none"/><polygon points="923.5,182.8 902.0,188.8 903.2,193.1 909.2,191.6 912.0,195.0 909.4,200.7 913.4,202.7" fill="#47aee9" stroke="#47aee9" stroke-width="0.8" stroke-linejoin="round"/></g>
<g filter="url(#sh2)"><path d="M664.2,441.7 L704.7,408.7" stroke="#efe441" stroke-width="4.4" stroke-linecap="round" fill="none"/><polygon points="715.3,400.1 693.8,406.0 695.0,410.3 701.0,408.9 703.8,412.3 701.1,417.9 705.1,420.0" fill="#efe441" stroke="#efe441" stroke-width="0.8" stroke-linejoin="round"/></g>
</svg>
</body></html>
